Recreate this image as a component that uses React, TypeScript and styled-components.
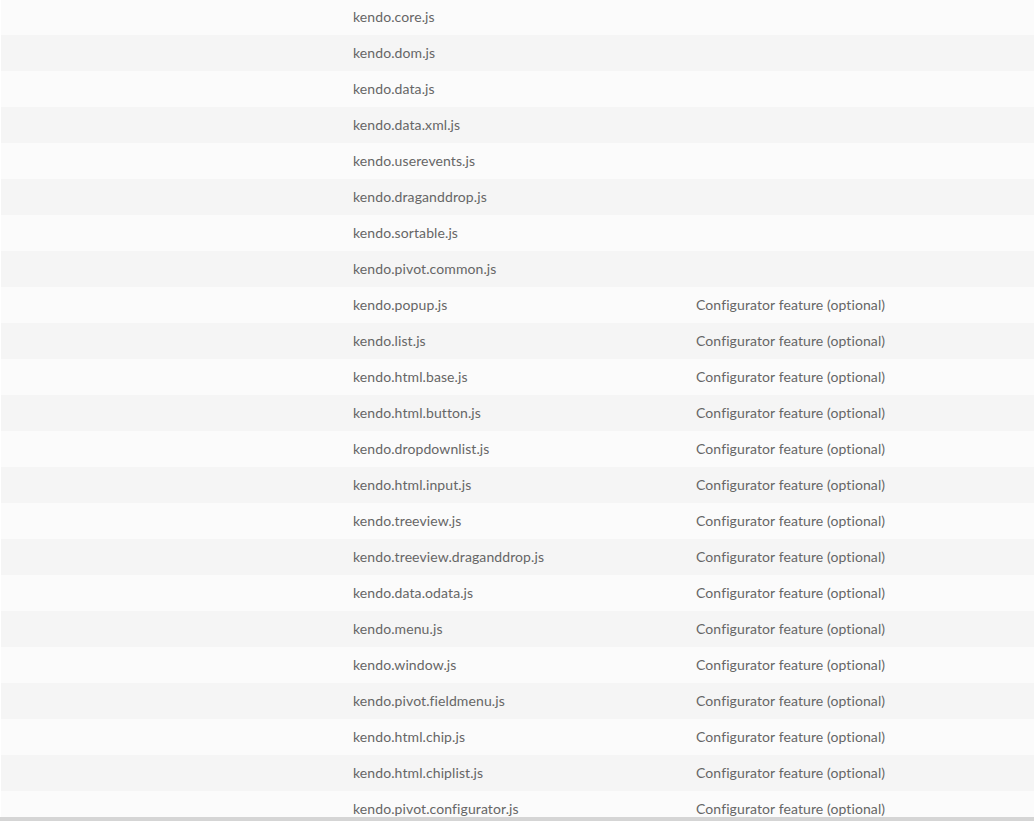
import React from 'react';
import styled, {createGlobalStyle} from 'styled-components';

const GlobalStyle = createGlobalStyle`
  html, body {
    margin: 0;
    padding: 0;
    background: #ffffff;
  }
`

const Viewport = styled.div`
  width: 1034px;
  height: 821px;
  display: flex;
  flex-direction: column;
  overflow: hidden;
  background: #ffffff;
`

const ScrollArea = styled.div`
  flex: 1;
  overflow: hidden;
  padding-left: 1px;
`

const Table = styled.div`
  margin-top: -1px;
  display: flex;
  flex-direction: column;
`

const Row = styled.div<{ $alt: boolean }>`
  display: grid;
  grid-template-columns: 340px 343px 1fr;
  height: 36px;
  align-items: center;
  background: ${(props) => props.$alt ? '#f5f5f5' : '#fbfbfb'};
`

const Cell = styled.div`
  padding: 0 0 2px 12px;
  font-family: Lato, "Liberation Sans", sans-serif;
  font-size: 14px;
  letter-spacing: 0.1px;
  color: #666666;
  white-space: nowrap;
`

const ScrollBar = styled.div`
  height: 4px;
  background: #d5d5d5;
`

const OPTIONAL = 'Configurator feature (optional)'

const files: [string, string][] = [
    ['kendo.core.js', ''],
    ['kendo.dom.js', ''],
    ['kendo.data.js', ''],
    ['kendo.data.xml.js', ''],
    ['kendo.userevents.js', ''],
    ['kendo.draganddrop.js', ''],
    ['kendo.sortable.js', ''],
    ['kendo.pivot.common.js', ''],
    ['kendo.popup.js', OPTIONAL],
    ['kendo.list.js', OPTIONAL],
    ['kendo.html.base.js', OPTIONAL],
    ['kendo.html.button.js', OPTIONAL],
    ['kendo.dropdownlist.js', OPTIONAL],
    ['kendo.html.input.js', OPTIONAL],
    ['kendo.treeview.js', OPTIONAL],
    ['kendo.treeview.draganddrop.js', OPTIONAL],
    ['kendo.data.odata.js', OPTIONAL],
    ['kendo.menu.js', OPTIONAL],
    ['kendo.window.js', OPTIONAL],
    ['kendo.pivot.fieldmenu.js', OPTIONAL],
    ['kendo.html.chip.js', OPTIONAL],
    ['kendo.html.chiplist.js', OPTIONAL],
    ['kendo.pivot.configurator.js', OPTIONAL],
]

const App: React.FC = () => {
    return <>
        <GlobalStyle/>
        <Viewport>
            <ScrollArea>
                <Table>
                    {files.map(([name, note], i) =>
                        <Row key={name} $alt={i % 2 === 1}>
                            <Cell/>
                            <Cell>{name}</Cell>
                            <Cell>{note}</Cell>
                        </Row>
                    )}
                </Table>
            </ScrollArea>
            <ScrollBar/>
        </Viewport>
    </>
}

export default App
